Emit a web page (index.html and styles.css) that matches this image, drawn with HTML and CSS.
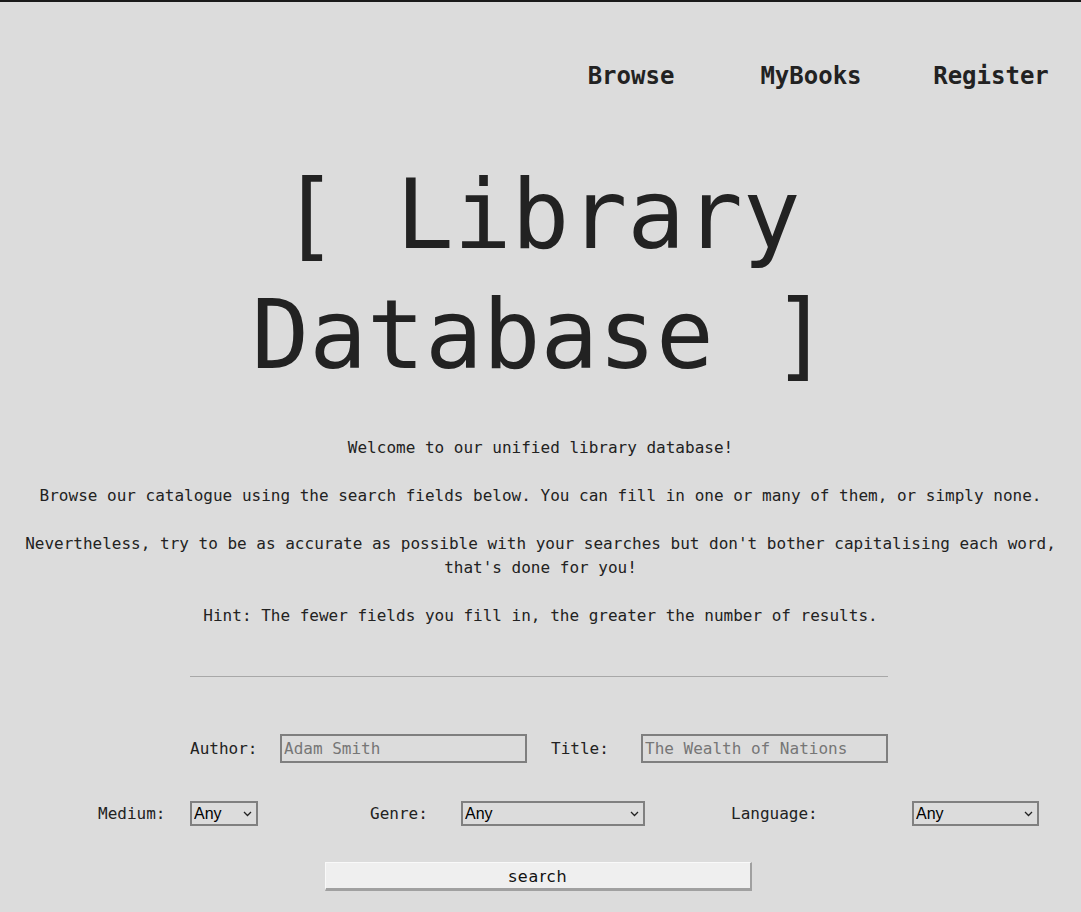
FILE: index.html
```html
<!DOCTYPE html>
<html lang="en">
<head>
<meta charset="utf-8">
<title>Library Database</title>
<link rel="stylesheet" href="styles.css">
</head>
<body>
<nav class="nav">
  <a class="nav-link" href="#">Browse</a>
  <a class="nav-link" href="#">MyBooks</a>
  <a class="nav-link" href="#">Register</a>
</nav>
<h1 class="title">[ Library Database ]</h1>
<section class="intro">
  <p>Welcome to our unified library database!</p>
  <p>Browse our catalogue using the search fields below. You can fill in one or many of them, or simply none.</p>
  <p>Nevertheless, try to be as accurate as possible with your searches but don't bother capitalising each word, that's done for you!</p>
  <p>Hint: The fewer fields you fill in, the greater the number of results.</p>
</section>
<hr class="divider">
<form class="search-form">
  <div class="row-text">
    <div class="field">
      <label class="label">Author:</label>
      <input class="text-input" type="text" placeholder="Adam Smith">
    </div>
    <div class="field">
      <label class="label">Title:</label>
      <input class="text-input" type="text" placeholder="The Wealth of Nations">
    </div>
  </div>
  <div class="row-select">
    <label class="label">Medium:</label>
    <div><span class="select-wrap"><select class="select sel-medium"><option>Any</option></select><svg class="chev" width="9" height="6" viewBox="0 0 9 6"><path d="M1 1 L4.5 4.5 L8 1" fill="none" stroke="#222" stroke-width="1.3"/></svg></span></div>
    <label class="label">Genre:</label>
    <div><span class="select-wrap"><select class="select sel-genre"><option>Any</option></select><svg class="chev" width="9" height="6" viewBox="0 0 9 6"><path d="M1 1 L4.5 4.5 L8 1" fill="none" stroke="#222" stroke-width="1.3"/></svg></span></div>
    <label class="label">Language:</label>
    <div><span class="select-wrap"><select class="select sel-lang"><option>Any</option></select><svg class="chev" width="9" height="6" viewBox="0 0 9 6"><path d="M1 1 L4.5 4.5 L8 1" fill="none" stroke="#222" stroke-width="1.3"/></svg></span></div>
  </div>
  <button class="search-btn" type="button">search</button>
</form>
</body>
</html>
```
FILE: styles.css
```css
html, body {
  margin: 0;
  padding: 0;
}
body {
  background: #dcdcdc;
  color: #222;
  font-family: "DejaVu Sans Mono", "Liberation Mono", monospace;
  font-size: 16px;
  border-top: 2px solid #1a1a1a;
  min-height: 910px;
}
.nav {
  display: flex;
  justify-content: flex-end;
  margin-top: 59px;
}
.nav-link {
  width: 180px;
  text-align: center;
  font-size: 24px;
  line-height: 30px;
  font-weight: bold;
  color: #222;
  text-decoration: none;
}
.title {
  max-width: 700px;
  margin: 64px auto 0;
  font-size: 96px;
  line-height: 120px;
  font-weight: normal;
  text-align: center;
  color: #222;
}
.intro {
  margin-top: 41px;
  padding: 0 8px;
  text-align: center;
}
.intro p {
  margin: 0 0 24px;
  line-height: 24px;
}
.intro p:last-child {
  margin-bottom: 0;
}
.divider {
  width: 698px;
  height: 1px;
  border: none;
  background: #a8a8a8;
  margin: 48px 0 0 190px;
}
.search-form {
  margin-top: 57px;
}
.row-text {
  display: flex;
  gap: 24px;
  margin-left: 190px;
}
.field {
  display: flex;
  align-items: center;
}
.label {
  width: 90px;
  line-height: 20px;
}
.text-input {
  box-sizing: border-box;
  width: 247px;
  height: 29px;
  border: 2px solid #7f7f7f;
  background: transparent;
  padding: 1px 2px;
  font-family: "DejaVu Sans Mono", "Liberation Mono", monospace;
  font-size: 16px;
  color: #222;
  outline: none;
}
.text-input::placeholder {
  color: #767676;
}
.row-select {
  display: grid;
  grid-template-columns: 92px 180px 91px 270px 181px 127px;
  align-items: center;
  margin: 38px 0 0 98px;
}
.row-select .label {
  width: auto;
}
.select-wrap {
  position: relative;
  display: inline-block;
  vertical-align: middle;
}
.chev {
  position: absolute;
  right: 6px;
  top: 10px;
  pointer-events: none;
}
.select {
  display: block;
  box-sizing: border-box;
  height: 25px;
  border: 2px solid #808080;
  border-radius: 0;
  background-color: transparent;
  font-family: "Liberation Sans", Arial, sans-serif;
  font-size: 16px;
  color: #000;
  padding: 0 2px;
  appearance: none;
  -webkit-appearance: none;
}
.sel-medium { width: 68px; }
.sel-genre { width: 184px; }
.sel-lang { width: 127px; }
.search-btn {
  display: block;
  box-sizing: border-box;
  width: 427px;
  height: 29px;
  margin: 36px 0 0 325px;
  background: #efefef;
  border-style: solid;
  border-width: 1px 2px 3px 1px;
  border-color: #f9f9f9 #a0a0a0 #a0a0a0 #f9f9f9;
  font-family: "DejaVu Sans", "Liberation Sans", sans-serif;
  font-size: 16px;
  letter-spacing: 1px;
  color: #111;
  padding: 1px 0 0;
}
```
